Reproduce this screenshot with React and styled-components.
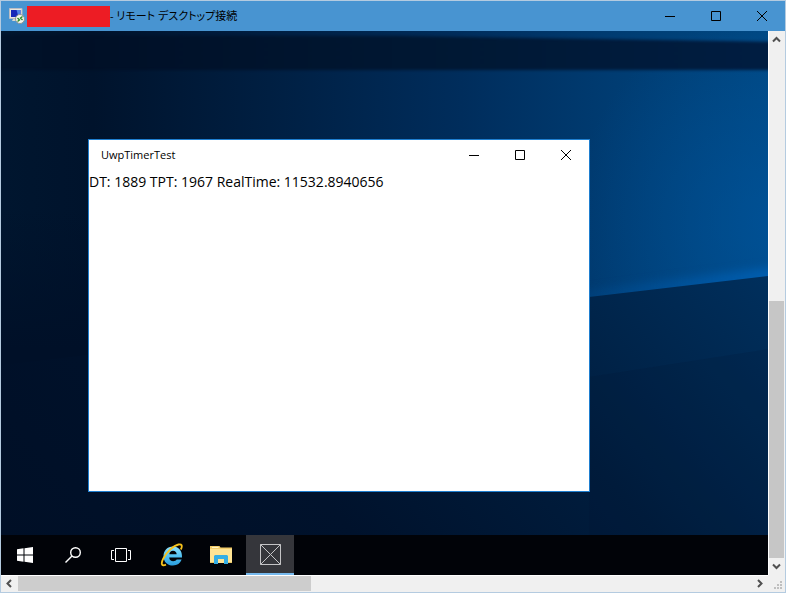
import React from 'react'
import styled, { createGlobalStyle } from 'styled-components'

const UI_FONT = '"Open Sans", "Noto Sans CJK JP", sans-serif'

const GlobalStyle = createGlobalStyle`
  * {
    box-sizing: border-box;
  }

  body {
    margin: 0;
    font-family: ${UI_FONT};
    font-size: 11px;
    color: #000;
  }
`

const Client = styled.main`
  display: flex;
  flex-direction: column;
  height: 100vh;
  border: 1px solid #b4cbe0;
`

const TitleBar = styled.header`
  flex: none;
  display: flex;
  align-items: center;
  height: 30px;
  padding-left: ${props => props.$inset}px;
  background-color: ${props => props.$color};
`

const Title = styled.h1`
  flex: 1;
  margin: 0;
  font-size: 11px;
  line-height: 16px;
  font-weight: 400;
  font-feature-settings: 'palt';
  white-space: pre;
`

const Redacted = styled.span`
  width: 83px;
  height: 21px;
  margin-left: 2px;
  background-color: #ed1c24;
`

const CaptionButton = styled.button`
  display: flex;
  align-items: center;
  justify-content: center;
  align-self: stretch;
  width: 46px;
  padding: 0;
  border: 0;
  background: none;
  color: inherit;

  &:hover {
    background-color: rgba(0,0,0,0.1);
  }
`

const View = styled.div`
  flex: 1;
  min-height: 0;
  display: grid;
  grid-template-columns: minmax(0, 1fr) 17px;
  grid-template-rows: minmax(0, 1fr) 17px;
  background-color: #f0f0f0;
`

const Desktop = styled.section`
  display: flex;
  flex-direction: column;
  min-height: 0;
  background-color: #001a3a;
`

const Workspace = styled.div`
  position: relative;
  flex: 1;
  min-height: 0;
  overflow: hidden;
`

const WallpaperSvg = styled.svg`
  display: block;
  width: 100%;
  height: 100%;
`

const AppWindow = styled.article`
  position: absolute;
  left: 87px;
  top: 108px;
  width: 502px;
  height: 353px;
  border: 1px solid #1f7fd0;
  background-color: #fff;
`

const Output = styled.p`
  margin: 0;
  font-size: 14px;
  line-height: 24px;
`

const Taskbar = styled.nav`
  flex: none;
  display: flex;
  height: 40px;
  background-color: #010308;
`

const TaskList = styled.div`
  display: flex;
  gap: 1px;
  margin-left: 3px;
`

const TaskButton = styled.button`
  display: flex;
  align-items: center;
  justify-content: center;
  width: 48px;
  height: 40px;
  padding: 0;
  border: 0;
  background-color: ${props => props.$active ? '#35363b' : 'transparent'};
  ${props => props.$active ? 'box-shadow: inset 0 -2px #76b9ed;' : ''}

  &:hover {
    background-color: #35363b;
  }
`

const ScrollBar = styled.div`
  display: flex;
  flex-direction: ${props => props.$vertical ? 'column' : 'row'};
  padding: ${props => props.$vertical ? '0 1px 0 0' : '0 0 1px 0'};
  border: 0 solid #fff;
  border-width: ${props => props.$vertical ? '0 0 0 1px' : '1px 0 0 0'};
`

const ScrollButton = styled.button`
  flex: none;
  display: flex;
  align-items: center;
  justify-content: center;
  width: ${props => props.$vertical ? 'auto' : '17px'};
  height: ${props => props.$vertical ? '17px' : 'auto'};
  padding: 0;
  border: 0;
  background: none;
`

const Track = styled.div`
  flex: ${props => props.$share} 1 0;
`

const Thumb = styled(Track)`
  background-color: ${props => props.$vertical ? '#c6c6c6' : '#cdcdcd'};
`

const Grip = styled.div`
  display: flex;
  align-items: flex-end;
  justify-content: flex-end;
  padding: 2px;
`

const glyphs = {
  最小化: 'M0 5.5H10',
  最大化: 'M0.5 0.5H9.5V9.5H0.5Z',
  閉じる: 'M0 0L10 10M10 0L0 10',
}

const CaptionButtons = () => (
  <>
    {Object.keys(glyphs).map(label =>
      <CaptionButton key={label} type="button" aria-label={label}>
        <svg width="10" height="10" viewBox="0 0 10 10" fill="none" stroke="currentColor">
          <path d={glyphs[label]} />
        </svg>
      </CaptionButton>
    )}
  </>
)

const arrows = {
  up: 'M1 6.5L4.5 3L8 6.5',
  down: 'M1 2.5L4.5 6L8 2.5',
  left: 'M6 1L2.5 4.5L6 8',
  right: 'M3 1L6.5 4.5L3 8',
}

const Arrow = ({ direction }) => (
  <svg width="9" height="9" viewBox="0 0 9 9" fill="none" stroke="#505050" strokeWidth="2">
    <path d={arrows[direction]} />
  </svg>
)

const RemoteIcon = () => (
  <svg width="16" height="16" viewBox="0 0 16 16">
    <path d="M0.5 0.5H13V10.5H0.5Z" fill="#e8e6df" stroke="#b9bcc4" />
    <path d="M2 2H11.5V9H2Z" fill="#1628b8" />
    <path d="M7.500 2H11.500V9H9.500Z" fill="#4f83e6" />
    <path d="M4 11H8V13H3Z" fill="#d8d6cf" />
    <circle cx="11" cy="11" r="4.500" fill="#f3f4ef" stroke="#8f948f" />
    <path d="M8.500 10L10.500 12L8.500 13.500M13.500 8.500L11.500 10L13.500 12" fill="none" stroke="#268a1e" strokeWidth="1.300" />
  </svg>
)

const WindowsIcon = () => (
  <svg width="16" height="16" viewBox="0 0 16 16" fill="#fff">
    <path d="M0 2.200L6.500 1.300V7.500H0ZM7.500 1.150L16 0V7.500H7.500ZM0 8.500H6.500V14.700L0 13.800ZM7.500 8.500H16V16L7.500 14.850Z" />
  </svg>
)

const SearchIcon = () => (
  <svg width="16" height="16" viewBox="0 0 16 16" fill="none" stroke="#fff" strokeWidth="1.400">
    <circle cx="10.500" cy="5.500" r="4.800" />
    <path d="M7 9L0.500 15.500" />
  </svg>
)

const TaskViewIcon = () => (
  <svg width="20" height="14" viewBox="0 0 20 14" fill="none" stroke="#fff">
    <path d="M4.500 0.500H15.500V13.500H4.500Z" />
    <path d="M3 2.500H0.500V11.500H3M17 2.500H19.500V11.500H17" />
  </svg>
)

const ExplorerBrowserIcon = () => (
  <svg width="24" height="24" viewBox="0 0 24 24" fill="none">
    <defs>
      <linearGradient id="ie" x1="0" y1="0" x2="0" y2="1">
        <stop offset="0" stopColor="#8fe0fb" />
        <stop offset="0.500" stopColor="#52c3f3" />
        <stop offset="1" stopColor="#2a9ddd" />
      </linearGradient>
    </defs>
    <path
      d="M22 14.500H9.200C9.400 17 11 18.300 13.200 18.300C14.900 18.300 16 17.700 16.700 16.600H21.600C20.300 20.400 17.200 22.500 13 22.500C7.400 22.500 3.500 18.900 3.500 13.200C3.500 7.500 7.400 3.500 13 3.500C18.700 3.500 22.300 7.600 22 14.500ZM9.300 11.200H16.700C16.500 8.900 15.200 7.700 13 7.700C10.900 7.700 9.600 8.900 9.300 11.200Z"
      fill="url(#ie)"
      fillRule="evenodd"
    />
    <path
      d="M20.800 6.500C22.800 2.500 21.700 0.800 18.500 1.500C13.500 2.600 6.800 8.900 3.300 15.500C0.800 20.300 1.200 23.700 6 21.700"
      stroke="#f6c21c"
      strokeWidth="1.800"
    />
  </svg>
)

const FolderIcon = () => (
  <svg width="22" height="20" viewBox="0 0 22 20">
    <path d="M0 1H9.500L10.500 2.500H22V8H0Z" fill="#f3cd6b" />
    <path d="M2 2H8.500V3H2Z" fill="#fff3c4" />
    <path d="M0 4H22V18H0Z" fill="#ffe494" />
    <path d="M4 11L5 10H17L18 11V19H14V14H8V19H4Z" fill="#35aee4" />
    <path d="M0 17H4V18H0ZM18 17H22V18H18Z" fill="#e9c766" />
  </svg>
)

const PlaceholderIcon = () => (
  <svg width="22" height="22" viewBox="0 0 22 22" fill="none" stroke="#c4c4c6">
    <path d="M1.500 0.500H21.500V20.500H1.500ZM1.500 0.500L21.500 20.500M21.500 0.500L1.500 20.500" />
  </svg>
)

const Wallpaper = () => (
  <WallpaperSvg viewBox="0 0 767 504" preserveAspectRatio="none" aria-hidden="true">
    <defs>
      <linearGradient id="sky">
        <stop offset="0" stopColor="#00162f" />
        <stop offset="0.120" stopColor="#00132c" />
        <stop offset="0.350" stopColor="#001f42" />
        <stop offset="0.600" stopColor="#002d5c" />
        <stop offset="0.800" stopColor="#003c72" />
        <stop offset="1" stopColor="#004883" />
      </linearGradient>
      <linearGradient id="band">
        <stop offset="0" stopColor="#001229" />
        <stop offset="0.130" stopColor="#000f26" />
        <stop offset="0.600" stopColor="#001834" />
        <stop offset="1" stopColor="#001d42" />
      </linearGradient>
      <linearGradient id="ground" x1="0" y1="504" x2="560" y2="0" gradientUnits="userSpaceOnUse">
        <stop offset="0" stopColor="#000f26" />
        <stop offset="0.350" stopColor="#00122c" />
        <stop offset="0.650" stopColor="#001d3e" />
        <stop offset="1" stopColor="#00305e" />
      </linearGradient>
      <linearGradient id="shade" x1="0" y1="0" x2="0" y2="1">
        <stop offset="0.300" stopColor="#001028" stopOpacity="0" />
        <stop offset="0.600" stopColor="#001028" stopOpacity="1" />
      </linearGradient>
      <radialGradient id="glow" cx="780" cy="190" r="210" gradientUnits="userSpaceOnUse">
        <stop offset="0" stopColor="#0058a4" stopOpacity="0.550" />
        <stop offset="1" stopColor="#0058a4" stopOpacity="0" />
      </radialGradient>
      <linearGradient id="beam" x1="588" y1="0" x2="767" y2="0" gradientUnits="userSpaceOnUse">
        <stop offset="0" stopColor="#0059a8" stopOpacity="0.200" />
        <stop offset="1" stopColor="#0062b8" stopOpacity="0.800" />
      </linearGradient>
      <filter id="soft" x="-50" y="-50" width="900" height="604" filterUnits="userSpaceOnUse" colorInterpolationFilters="sRGB">
        <feGaussianBlur stdDeviation="1.5" />
      </filter>
      <filter id="haze" x="500" y="200" width="400" height="120" filterUnits="userSpaceOnUse" colorInterpolationFilters="sRGB">
        <feGaussianBlur stdDeviation="5" />
      </filter>
    </defs>
    <path d="M0 0H767V504H0Z" fill="url(#sky)" />
    <path d="M0 0H767V504H0Z" fill="url(#glow)" />
    <path d="M-20 4L400 5L790 11V39H-20Z" fill="url(#band)" filter="url(#soft)" />
    <path d="M0 39H88V504H0Z" fill="url(#shade)" />
    <path d="M580 260L790 234V250L580 272Z" fill="url(#beam)" filter="url(#haze)" />
    <path d="M0 334L588 266L767 245V504H0Z" fill="url(#ground)" />
    <path d="M588 346L767 318V504H588Z" fill="#001532" opacity="0.150" />
  </WallpaperSvg>
)

const apps = [
  { name: 'Internet Explorer', Icon: ExplorerBrowserIcon },
  { name: 'エクスプローラー', Icon: FolderIcon },
  { name: 'UwpTimerTest', Icon: PlaceholderIcon, active: true },
]

const App = () => (
  <>
    <GlobalStyle />
    <Client>
      <TitleBar $inset={8} $color="#4894d1">
        <RemoteIcon />
        <Redacted />
        <Title>- リモート デスクトップ接続</Title>
        <CaptionButtons />
      </TitleBar>
      <View>
        <Desktop>
          <Workspace>
            <Wallpaper />
            <AppWindow>
              <TitleBar $inset={12} $color="#fff">
                <Title as="h2">UwpTimerTest</Title>
                <CaptionButtons />
              </TitleBar>
              <Output>DT: 1889 TPT: 1967 RealTime: 11532.8940656</Output>
            </AppWindow>
          </Workspace>
          <Taskbar>
            <TaskButton type="button" aria-label="スタート"><WindowsIcon /></TaskButton>
            <TaskButton type="button" aria-label="検索"><SearchIcon /></TaskButton>
            <TaskButton type="button" aria-label="タスク ビュー"><TaskViewIcon /></TaskButton>
            <TaskList>
              {apps.map(({ name, Icon, active }) =>
                <TaskButton key={name} type="button" aria-label={name} $active={active}>
                  <Icon />
                </TaskButton>
              )}
            </TaskList>
          </Taskbar>
        </Desktop>
        <ScrollBar $vertical>
          <ScrollButton type="button" aria-label="上へ" $vertical><Arrow direction="up" /></ScrollButton>
          <Track $share={253} />
          <Thumb $share={257} $vertical />
          <ScrollButton type="button" aria-label="下へ" $vertical><Arrow direction="down" /></ScrollButton>
        </ScrollBar>
        <ScrollBar>
          <ScrollButton type="button" aria-label="左へ"><Arrow direction="left" /></ScrollButton>
          <Thumb $share={293} />
          <Track $share={440} />
          <ScrollButton type="button" aria-label="右へ"><Arrow direction="right" /></ScrollButton>
        </ScrollBar>
        <Grip>
          <svg width="9" height="9" viewBox="0 0 9 9" fill="#bfbfbf">
            <path d="M6 0h2v2h-2zM3 3h2v2h-2zM6 3h2v2h-2zM0 6h2v2h-2zM3 6h2v2h-2zM6 6h2v2h-2z" />
          </svg>
        </Grip>
      </View>
    </Client>
  </>
)

export default App
